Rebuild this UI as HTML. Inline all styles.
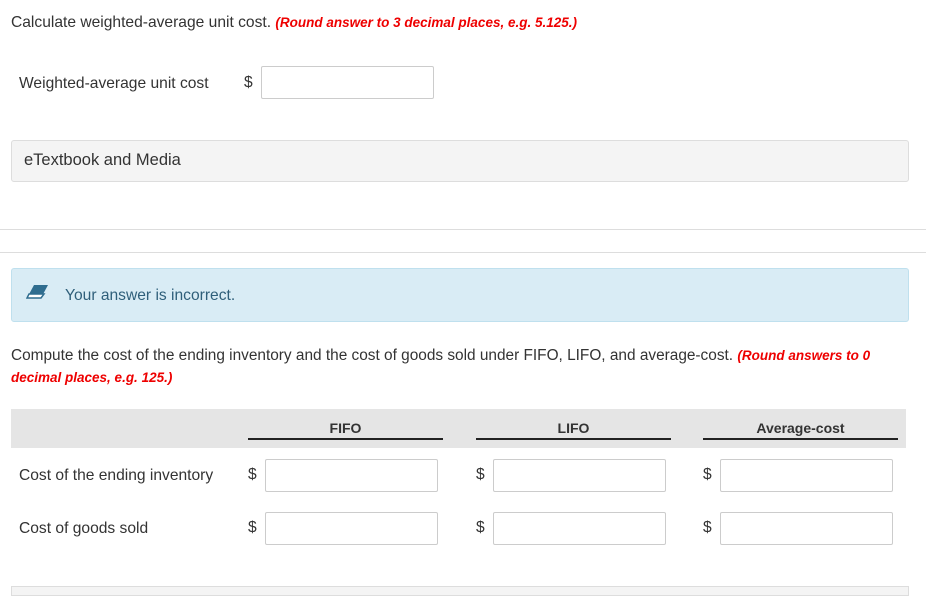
<!DOCTYPE html>
<html><head><meta charset="utf-8"><style>
*{margin:0;padding:0;box-sizing:border-box}
body{width:926px;height:590px;overflow:hidden;background:#fff;font-family:"Liberation Sans",sans-serif;color:#333;font-size:15.6px;position:relative}
.a{position:absolute;white-space:nowrap}
.red{color:#e00;font-weight:bold;font-style:italic;font-size:13.5px}
.inp{position:absolute;border:1px solid #ccc;border-radius:2px;background:#fff}
.hd{position:absolute;top:420px;font-weight:bold;font-size:14px;text-align:center;border-bottom:2px solid #222;height:20px}
</style></head><body>
<div class="a" style="left:11px;top:14px">Calculate weighted-average unit cost. <span class="red">(Round answer to 3 decimal places, e.g. 5.125.)</span></div>
<div class="a" style="left:19px;top:75px">Weighted-average unit cost</div>
<div class="a" style="left:244px;top:74px">$</div>
<div class="inp" style="left:261px;top:66px;width:173px;height:33px"></div>
<div class="a" style="left:11px;top:140px;width:898px;height:42px;background:#f4f4f4;border:1px solid #ddd;border-radius:3px"></div>
<div class="a" style="left:24px;top:151px;font-size:16.5px">eTextbook and Media</div>
<div class="a" style="left:0;top:229px;width:926px;height:1px;background:#ddd"></div>
<div class="a" style="left:0;top:252px;width:926px;height:1px;background:#ddd"></div>
<div class="a" style="left:11px;top:268px;width:898px;height:54px;background:#d9ecf5;border:1px solid #bfe0ee;border-radius:3px"></div>
<svg class="a" style="left:26px;top:284px" width="24" height="16" viewBox="0 0 24 16"><path d="M8 1H22L15 14H1Z" fill="#2f6d8f"/><path d="M3 10H18L15 14H1Z" fill="#fff" stroke="#2f6d8f" stroke-width="1.5"/></svg>
<div class="a" style="left:65px;top:287px;color:#2f5f7a">Your answer is incorrect.</div>
<div class="a" style="left:11px;top:347px;font-size:15.4px">Compute the cost of the ending inventory and the cost of goods sold under FIFO, LIFO, and average-cost. <span class="red">(Round answers to 0</span></div>
<div class="a red" style="left:11px;top:370px">decimal places, e.g. 125.)</div>
<div class="a" style="left:11px;top:409px;width:895px;height:39px;background:#e5e5e5"></div>
<div class="hd" style="left:248px;width:195px">FIFO</div>
<div class="hd" style="left:476px;width:195px">LIFO</div>
<div class="hd" style="left:703px;width:195px">Average-cost</div>
<div class="a" style="left:19px;top:467px">Cost of the ending inventory</div>
<div class="a" style="left:19px;top:520px">Cost of goods sold</div>
<div class="a" style="left:248px;top:466px">$</div><div class="inp" style="left:265px;top:459px;width:173px;height:33px"></div>
<div class="a" style="left:476px;top:466px">$</div><div class="inp" style="left:493px;top:459px;width:173px;height:33px"></div>
<div class="a" style="left:703px;top:466px">$</div><div class="inp" style="left:720px;top:459px;width:173px;height:33px"></div>
<div class="a" style="left:248px;top:519px">$</div><div class="inp" style="left:265px;top:512px;width:173px;height:33px"></div>
<div class="a" style="left:476px;top:519px">$</div><div class="inp" style="left:493px;top:512px;width:173px;height:33px"></div>
<div class="a" style="left:703px;top:519px">$</div><div class="inp" style="left:720px;top:512px;width:173px;height:33px"></div>
<div class="a" style="left:11px;top:586px;width:898px;height:10px;background:#f4f4f4;border:1px solid #ddd"></div>
</body></html>
